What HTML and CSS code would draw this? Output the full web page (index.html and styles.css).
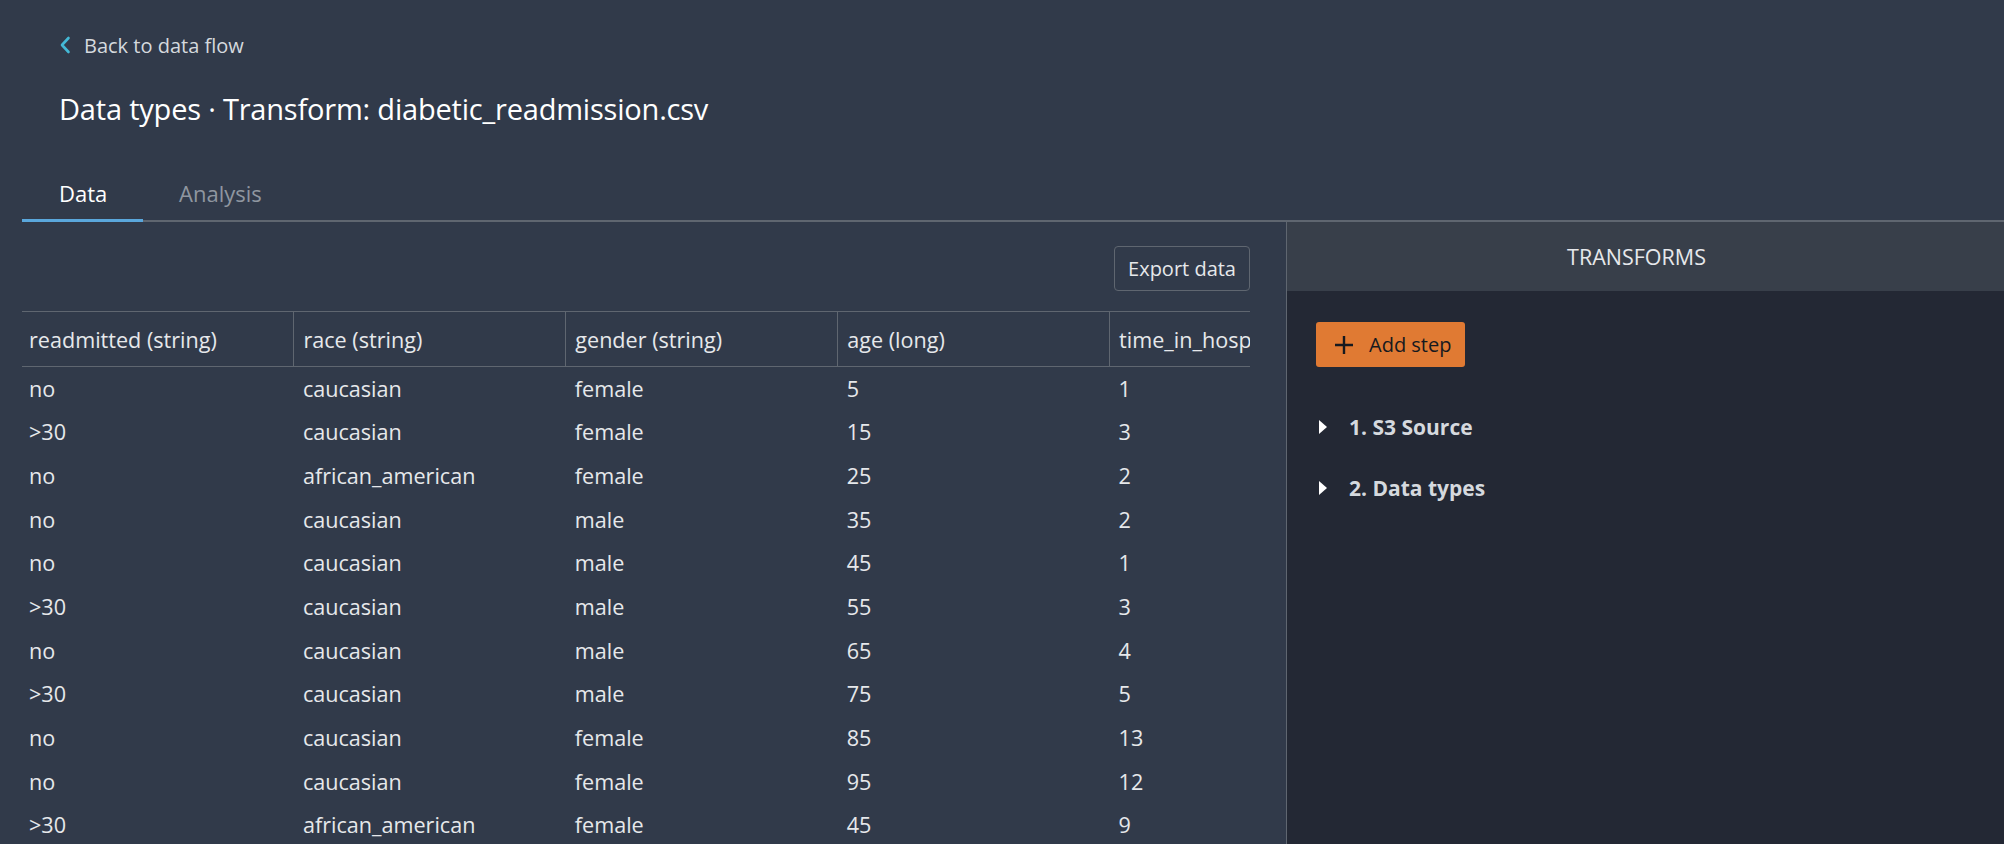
FILE: index.html
```html
<!DOCTYPE html>
<html>
<head>
<meta charset="utf-8">
<link rel="stylesheet" href="styles.css">
</head>
<body>
<div class="page">
  <header class="top">
    <a class="back"><svg class="chev" width="12" height="18" viewBox="0 0 12 18"><path d="M9.5 2 L3 9 L9.5 16" fill="none" stroke="#44b9d6" stroke-width="2.6" stroke-linecap="round" stroke-linejoin="round"/></svg><span>Back to data flow</span></a>
    <h1 class="title">Data types · Transform: diabetic_readmission.csv</h1>
  </header>
  <nav class="tabs">
    <div class="tab active">Data</div>
    <div class="tab">Analysis</div>
  </nav>
  <main class="main">
    <section class="left">
      <div class="toolbar"><button class="btn">Export data</button></div>
      <div class="table-wrap">
        <table class="grid">
          <thead>
            <tr><th>readmitted (string)</th><th>race (string)</th><th>gender (string)</th><th>age (long)</th><th>time_in_hospital (long)</th></tr>
          </thead>
          <tbody>
            <tr><td>no</td><td>caucasian</td><td>female</td><td>5</td><td>1</td></tr>
            <tr><td>&gt;30</td><td>caucasian</td><td>female</td><td>15</td><td>3</td></tr>
            <tr><td>no</td><td>african_american</td><td>female</td><td>25</td><td>2</td></tr>
            <tr><td>no</td><td>caucasian</td><td>male</td><td>35</td><td>2</td></tr>
            <tr><td>no</td><td>caucasian</td><td>male</td><td>45</td><td>1</td></tr>
            <tr><td>&gt;30</td><td>caucasian</td><td>male</td><td>55</td><td>3</td></tr>
            <tr><td>no</td><td>caucasian</td><td>male</td><td>65</td><td>4</td></tr>
            <tr><td>&gt;30</td><td>caucasian</td><td>male</td><td>75</td><td>5</td></tr>
            <tr><td>no</td><td>caucasian</td><td>female</td><td>85</td><td>13</td></tr>
            <tr><td>no</td><td>caucasian</td><td>female</td><td>95</td><td>12</td></tr>
            <tr><td>&gt;30</td><td>african_american</td><td>female</td><td>45</td><td>9</td></tr>
          </tbody>
        </table>
      </div>
    </section>
    <aside class="right">
      <div class="panel-head">TRANSFORMS</div>
      <div class="panel-body">
        <button class="add"><svg width="20" height="20" viewBox="0 0 20 20"><path d="M10 1 V19 M1 10 H19" stroke="#16191f" stroke-width="2.4"/></svg><span>Add step</span></button>
        <ul class="steps">
          <li class="step"><svg width="10" height="14" viewBox="0 0 10 14"><path d="M1 0 L9 7 L1 14 Z" fill="#ffffff"/></svg><span>1. S3 Source</span></li>
          <li class="step"><svg width="10" height="14" viewBox="0 0 10 14"><path d="M1 0 L9 7 L1 14 Z" fill="#ffffff"/></svg><span>2. Data types</span></li>
        </ul>
      </div>
    </aside>
  </main>
</div>
</body>
</html>
```

FILE: styles.css
```css
* { box-sizing: border-box; }
html, body { margin: 0; padding: 0; }
body {
  background: #313a4a;
  color: #e6e8eb;
  font-family: "Open Sans", "Liberation Sans", sans-serif;
  width: 2004px;
  height: 844px;
  overflow: hidden;
}
.page { display: flex; flex-direction: column; height: 844px; }
.top { padding: 31px 0 0 59px; }
.back { display: flex; align-items: center; gap: 13px; color: #d5d9de; font-size: 20px; height: 28px; }
.chev { flex: none; }
.title { margin: 32px 0 0; font-size: 29px; font-weight: 500; color: #ffffff; line-height: 36px; letter-spacing: -0.2px; }
.tabs {
  display: flex;
  margin: 48px 0 0 22px;
  border-bottom: 2px solid #5f6670;
  height: 47px;
}
.tab { font-size: 22px; color: #8f96a0; padding: 3px 37px 0; position: relative; }
.tab.active { color: #ffffff; width: 121px; }
.tab.active::after { content: ""; position: absolute; left: 0; right: 0; bottom: -2px; height: 3px; background: #5aa7dc; }
.tab:nth-child(2) { padding-left: 36px; }
.main { display: flex; flex: 1; min-height: 0; }
.left { width: 1264px; margin-left: 22px; padding-right: 36px; display: flex; flex-direction: column; overflow: hidden; }
.toolbar { display: flex; justify-content: flex-end; padding-top: 24px; height: 89px; }
.btn {
  height: 45px; padding: 0 13px; background: transparent; border: 1px solid #5f6670; border-radius: 4px;
  color: #e6e8eb; font-family: inherit; font-size: 20px; font-weight: 500;
}
.table-wrap { width: 1228px; overflow: hidden; }
.grid { border-collapse: collapse; table-layout: fixed; width: 1360px; font-size: 21.6px; }
.grid th { text-align: left; font-weight: 400; height: 55px; padding: 2px 9px 0; border-top: 1px solid #5f6670; border-bottom: 1px solid #5f6670; border-right: 1px solid #5f6670; white-space: nowrap; overflow: hidden; color: #e6e8eb; }
.grid th:first-child { padding-left: 7px; }
.grid td { height: 43.7px; padding: 0 9px; white-space: nowrap; }
.grid td:first-child { padding-left: 7px; }
.right { flex: 1; border-left: 1px solid #5f6670; display: flex; flex-direction: column; background: #232834; }
.panel-head { height: 69px; padding-right: 18px; background: #383f4a; display: flex; align-items: center; justify-content: center; font-size: 21.5px; font-weight: 500; color: #e6e8eb; }
.panel-body { padding: 31px 0 0 29px; }
.add {
  display: flex; align-items: center; gap: 15px; height: 45px; width: 149px; padding: 0 0 0 18px;
  background: #e07a33; border: none; border-radius: 3px; color: #16191f; font-family: inherit; font-size: 20px;
}
.steps { list-style: none; margin: 29px 0 0; padding: 0; }
.step { display: flex; align-items: center; gap: 21px; height: 61px; font-size: 21px; font-weight: 700; color: #d5d9de; padding-left: 2px; }
```
